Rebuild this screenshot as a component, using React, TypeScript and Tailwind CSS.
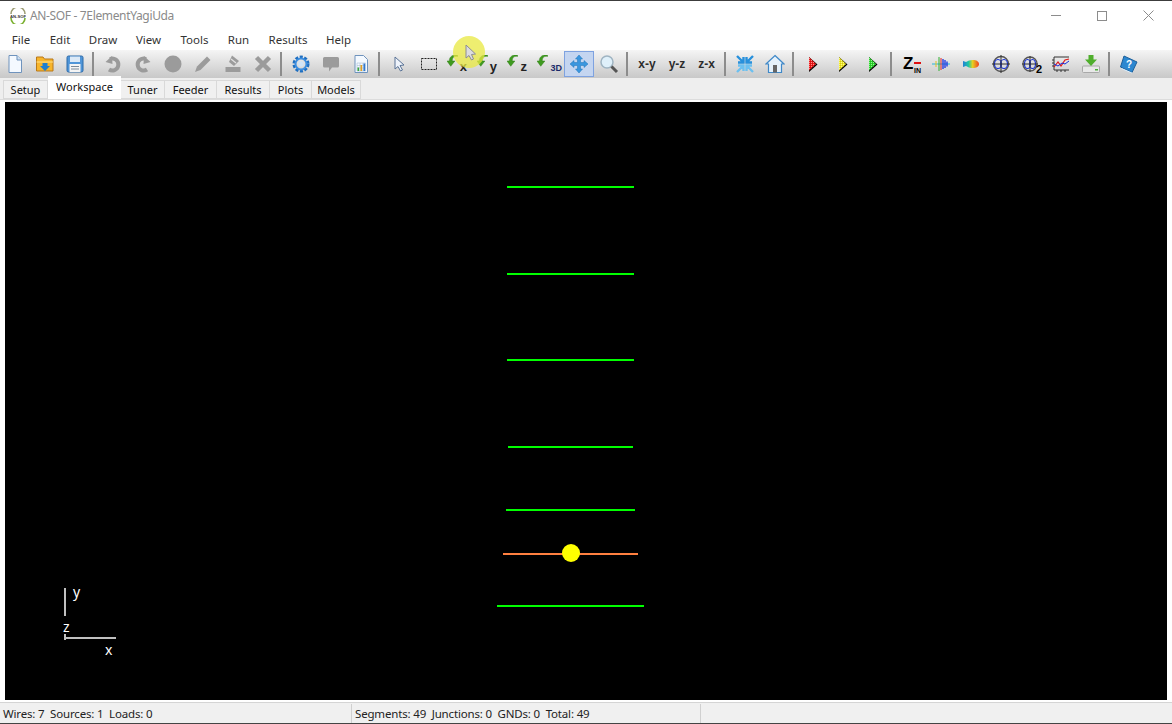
import type { ReactNode } from 'react';

const MENUS = [
  { label: 'File', w: 'w-[38px]' },
  { label: 'Edit', w: 'w-[40px]' },
  { label: 'Draw', w: 'w-[46px]' },
  { label: 'View', w: 'w-[45px]' },
  { label: 'Tools', w: 'w-[47px]' },
  { label: 'Run', w: 'w-[41px]' },
  { label: 'Results', w: 'w-[58px]' },
  { label: 'Help', w: 'w-[43px]' },
];

const TABS = [
  { label: 'Setup', w: 'w-[45px]' },
  { label: 'Workspace', w: 'w-[73px]', active: true },
  { label: 'Tuner', w: 'w-[44px]' },
  { label: 'Feeder', w: 'w-[52px]' },
  { label: 'Results', w: 'w-[53px]' },
  { label: 'Plots', w: 'w-[42px]' },
  { label: 'Models', w: 'w-[49px]' },
];

const WIRES = [
  { y: 187, x1: 507, x2: 634, color: '#00ff00' },
  { y: 274, x1: 507, x2: 634, color: '#00ff00' },
  { y: 360, x1: 507, x2: 634, color: '#00ff00' },
  { y: 447, x1: 508, x2: 633, color: '#00ff00' },
  { y: 510, x1: 506, x2: 635, color: '#00ff00' },
  { y: 554, x1: 503, x2: 638, color: '#ff8040' },
  { y: 606, x1: 497, x2: 644, color: '#00ff00' },
];

function Ico({ children }: { children: ReactNode }) {
  return (
    <svg width="20" height="20" viewBox="0 0 20 20" fill="none">
      {children}
    </svg>
  );
}

function Btn({ children, selected }: { children: ReactNode; selected?: boolean }) {
  return (
    <div
      className={
        selected
          ? 'w-[30px] h-[26px] flex items-center justify-center bg-[#c4d5f0] border border-[#7ea2e0]'
          : 'w-[30px] h-[26px] flex items-center justify-center'
      }
    >
      {children}
    </div>
  );
}

function Sep() {
  return (
    <div className="w-2 h-[24px] pl-[2px]">
      <div className="w-[2px] h-full bg-[#8c8c8c]" />
    </div>
  );
}

function RotateArrow({ label, small }: { label: string; small?: boolean }) {
  return (
    <div className="relative w-[20px] h-[20px]">
      <svg className="absolute left-[-2px] top-[1px]" width="12" height="12" viewBox="0 0 16 16">
        <path d="M14 2 C9 1 7 4 7 8 L10.5 8 L5 15 L0 8 L3 8 C3 2 8 -1 14 0 Z" fill="#3f9a1f" stroke="#2a7a12" strokeWidth="0.6" />
      </svg>
      <span
        className={
          small
            ? "absolute right-[-3px] bottom-[1px] font-['Liberation_Sans',sans-serif] font-bold text-[9px] leading-none text-[#1a2a6a]"
            : "absolute right-[2px] bottom-[1px] font-['Liberation_Sans',sans-serif] font-bold text-[13px] leading-none text-[#222]"
        }
      >
        {label}
      </span>
    </div>
  );
}

function RunArrow({ fill }: { fill: string }) {
  return (
    <svg width="20" height="20" viewBox="0 0 20 20" fill="none">
      <defs>
        <pattern id="dither" width="2" height="2" patternUnits="userSpaceOnUse">
          <rect x="0" y="0" width="1" height="1" fill="#ffffff" opacity="0.5" />
          <rect x="1" y="1" width="1" height="1" fill="#000000" opacity="0.15" />
        </pattern>
      </defs>
      <path d="M6 3 L14.5 10.5 L6 18 Z" fill="#000" />
      <path d="M6 3 L13 10 L6 16.5 Z" fill={fill} />
      <path d="M6 3 L13 10 L6 16.5 Z" fill="url(#dither)" />
    </svg>
  );
}

function PlaneText({ label }: { label: string }) {
  return <span className="font-['Liberation_Sans',sans-serif] font-bold text-[12px] leading-none text-[#2c2c2c]">{label}</span>;
}

function Toolbar() {
  const gray = '#9b9b9b';
  return (
    <div className="h-[28px] flex items-center bg-gradient-to-b from-[#f5f5f5] to-[#c8c8c8]">
      <Btn>
        <Ico>
          <path d="M4 1.5 H12 L16.5 6 V18.5 H4 Z" fill="#f4f9ff" stroke="#6f93bd" />
          <path d="M12 1.5 V6 H16.5" fill="#cfe0f2" stroke="#6f93bd" />
        </Ico>
      </Btn>
      <Btn>
        <Ico>
          <path d="M1.5 5 V3 H8 L9.5 5 H18 V17 H1.5 Z" fill="#f7b52c" stroke="#b9791a" />
          <path d="M1.5 8 H18" stroke="#ffe08a" />
          <path d="M7.5 9 H12.5 V12 H15 L10 17 L5 12 H7.5 Z" fill="#1f7fd0" />
        </Ico>
      </Btn>
      <Btn>
        <Ico>
          <rect x="2" y="2" width="16" height="16" rx="1.5" fill="#4f95d8" stroke="#2c6aa8" />
          <rect x="5" y="2.5" width="10" height="5.5" fill="#dbe9f7" />
          <rect x="4.5" y="10" width="11" height="8" fill="#f4f4f4" />
          <path d="M6 12.5 H14 M6 15 H14" stroke="#7a8a9a" />
        </Ico>
      </Btn>
      <Sep />
      <Btn>
        <Ico>
          <path d="M7 5 A6 6 0 1 1 6 15.5" stroke={gray} strokeWidth="4" />
          <path d="M2.5 8 L9 2 L9.5 10 Z" fill={gray} />
        </Ico>
      </Btn>
      <Btn>
        <Ico>
          <path d="M13 5 A6 6 0 1 0 14 15.5" stroke={gray} strokeWidth="4" />
          <path d="M17.5 8 L11 2 L10.5 10 Z" fill={gray} />
        </Ico>
      </Btn>
      <Btn>
        <Ico>
          <circle cx="10" cy="10" r="8.5" fill={gray} />
        </Ico>
      </Btn>
      <Btn>
        <Ico>
          <path d="M2 18 L4 12.5 L14 2.5 L17.5 6 L7.5 16 Z" fill={gray} />
        </Ico>
      </Btn>
      <Btn>
        <Ico>
          <path d="M9 1.5 L16 7 L11 12 L6 8 Z" fill={gray} />
          <rect x="2.5" y="13" width="15" height="5" fill={gray} />
          <path d="M8 5 L13 9" stroke="#e2e2e2" strokeWidth="1.2" />
        </Ico>
      </Btn>
      <Btn>
        <Ico>
          <path d="M3.5 3.5 L16.5 16.5 M16.5 3.5 L3.5 16.5" stroke={gray} strokeWidth="4.5" />
        </Ico>
      </Btn>
      <Sep />
      <Btn>
        <Ico>
          <circle cx="10" cy="10" r="7" stroke="#1f6fc0" strokeWidth="3" strokeDasharray="3 1.5" />
          <circle cx="10" cy="10" r="5.5" stroke="#3c8ee0" strokeWidth="2" />
          <circle cx="10" cy="10" r="2.8" fill="#cfe4f8" />
        </Ico>
      </Btn>
      <Btn>
        <Ico>
          <path d="M3.5 3 H16.5 A1.5 1.5 0 0 1 18 4.5 V12 A1.5 1.5 0 0 1 16.5 13.5 H11 L8 17.5 V13.5 H3.5 A1.5 1.5 0 0 1 2 12 V4.5 A1.5 1.5 0 0 1 3.5 3 Z" fill={gray} />
        </Ico>
      </Btn>
      <Btn>
        <Ico>
          <path d="M4 1.5 H12.5 L16.5 5.5 V18.5 H4 Z" fill="#f4f9ff" stroke="#6f93bd" />
          <path d="M6 9 H14.5 V17 H6 Z M6 11.5 H14.5 M6 14 H14.5 M9 9 V17 M12 9 V17" stroke="#a8bdd4" strokeWidth="0.6" />
          <rect x="6.5" y="13.5" width="1.6" height="3.5" fill="#3aa63a" />
          <rect x="9.5" y="11" width="1.6" height="6" fill="#e0a020" />
          <rect x="12.5" y="9.5" width="1.6" height="7.5" fill="#2f78d0" />
        </Ico>
      </Btn>
      <Sep />
      <Btn>
        <Ico>
          <path d="M6 3 L6 15 L9 12.5 L11.5 17 L13.5 16 L11 11.5 L15 11 Z" fill="#eef3fb" stroke="#5a7396" />
        </Ico>
      </Btn>
      <Btn>
        <Ico>
          <rect x="2.5" y="4.5" width="15" height="11" stroke="#222" strokeDasharray="2 1" />
        </Ico>
      </Btn>
      <Btn>
        <RotateArrow label="x" />
      </Btn>
      <Btn>
        <RotateArrow label="y" />
      </Btn>
      <Btn>
        <RotateArrow label="z" />
      </Btn>
      <Btn>
        <RotateArrow label="3D" small />
      </Btn>
      <Btn selected>
        <Ico>
          <path d="M10 1 L13.5 5 H11.5 V8.5 H15 V6.5 L19 10 L15 13.5 V11.5 H11.5 V15 H13.5 L10 19 L6.5 15 H8.5 V11.5 H5 V13.5 L1 10 L5 6.5 V8.5 H8.5 V5 H6.5 Z" fill="#3a96de" stroke="#1f74b8" strokeWidth="0.5" />
        </Ico>
      </Btn>
      <Btn>
        <Ico>
          <circle cx="8" cy="8" r="6" fill="#dff0fa" stroke="#9fb4c2" strokeWidth="1.5" />
          <path d="M12.5 12.5 L18 18" stroke="#555" strokeWidth="3" />
        </Ico>
      </Btn>
      <Sep />
      <Btn>
        <PlaneText label="x-y" />
      </Btn>
      <Btn>
        <PlaneText label="y-z" />
      </Btn>
      <div className="w-[29px] h-[26px] flex items-center justify-center">
        <PlaneText label="z-x" />
      </div>
      <div className="w-[1px]" />
      <Sep />
      <Btn>
        <Ico>
          <path d="M2 2 L8.5 8.5 M8.5 3 V8.5 H3 M18 2 L11.5 8.5 M11.5 3 V8.5 H17" stroke="#2790dc" strokeWidth="2.4" />
          <path d="M2 18 L8.5 11.5 M8.5 17 V11.5 H3 M18 18 L11.5 11.5 M11.5 17 V11.5 H17" stroke="#6cc0f0" strokeWidth="2.4" />
        </Ico>
      </Btn>
      <Btn>
        <Ico>
          <path d="M10 1.5 L19 10 H16.5 V18.5 H3.5 V10 H1 Z" fill="#e6f2fb" stroke="#3f88c8" strokeWidth="1.2" />
          <rect x="8" y="11" width="4" height="7.5" fill="#666" />
        </Ico>
      </Btn>
      <Sep />
      <Btn>
        <RunArrow fill="#f01818" />
      </Btn>
      <Btn>
        <RunArrow fill="#f2ea22" />
      </Btn>
      <Btn>
        <RunArrow fill="#2bd82b" />
      </Btn>
      <Sep />
      <Btn>
        <div className="relative w-[20px] h-[20px] font-['Liberation_Sans',sans-serif] font-bold text-black">
          <span className="absolute left-[2px] top-[1px] text-[17px] leading-[17px]">Z</span>
          <span className="absolute right-0 bottom-[-1px] text-[7px] leading-[8px]">IN</span>
          <div className="absolute right-0 top-[8px] w-[7px] h-[2px] bg-[#e01010]" />
        </div>
      </Btn>
      <Btn>
        <Ico>
          <path d="M1 10 H19" stroke="#25b8d8" />
          <path d="M5 7 V13" stroke="#e8c020" />
          <path d="M8 3 V17" stroke="#30b030" />
          <path d="M10 4 V16" stroke="#e02020" />
          <path d="M12 5 V15 M14 6 V14 M16 7.5 V12.5" stroke="#1830e0" strokeWidth="1.3" />
        </Ico>
      </Btn>
      <Btn>
        <svg width="20" height="20" viewBox="0 0 20 20">
          <defs>
            <linearGradient id="lobe" x1="0" x2="1">
              <stop offset="0" stopColor="#2080d8" />
              <stop offset="0.35" stopColor="#20c8a0" />
              <stop offset="0.6" stopColor="#e8d020" />
              <stop offset="1" stopColor="#f04020" />
            </linearGradient>
          </defs>
          <path d="M2 7 L5 8 L8 6.5 C13 5 18 6.5 18 10 C18 13.5 13 15 8 13.5 L5 12 L2 13 Z" fill="url(#lobe)" />
        </svg>
      </Btn>
      <Btn>
        <Ico>
          <circle cx="10" cy="10" r="7.5" stroke="#555" strokeWidth="1.4" />
          <ellipse cx="7" cy="10" rx="3.5" ry="4.5" stroke="#1430d8" strokeWidth="1.2" />
          <ellipse cx="13" cy="10" rx="3.5" ry="4.5" stroke="#1430d8" strokeWidth="1.2" />
          <path d="M1 10 H19 M10 1 V19" stroke="#333" />
        </Ico>
      </Btn>
      <Btn>
        <div className="relative w-[20px] h-[20px]">
          <Ico>
            <circle cx="9" cy="10" r="7" stroke="#555" strokeWidth="1.4" />
            <ellipse cx="6.5" cy="10" rx="3" ry="4.5" stroke="#1430d8" strokeWidth="1.2" />
            <ellipse cx="11.5" cy="10" rx="3" ry="4.5" stroke="#1430d8" strokeWidth="1.2" />
            <path d="M1 10 H17 M9 2 V18" stroke="#333" />
          </Ico>
          <span className="absolute right-[-1px] bottom-[-1px] font-['Liberation_Sans',sans-serif] font-bold text-[11px] leading-none text-black">2</span>
        </div>
      </Btn>
      <Btn>
        <Ico>
          <path d="M3 3 V16 H18 M3 3 H18 M1 6 H3 M1 9 H3 M1 12 H3 M6 16 V18 M10 16 V18 M14 16 V18" stroke="#333" />
          <path d="M3 13 L7 8 L10 12 L14 6 L18 5" stroke="#e01818" strokeWidth="1.2" />
          <path d="M3 10 L7 12 L11 9 L14 10 L18 7" stroke="#1830e0" />
        </Ico>
      </Btn>
      <Btn>
        <Ico>
          <rect x="1.5" y="12" width="17" height="6.5" rx="1" fill="#e8e8e8" stroke="#a8a8a8" />
          <rect x="14" y="15" width="3" height="1.5" fill="#4caf3a" />
          <path d="M7.5 1 H12.5 V5.5 H16 L10 12 L4 5.5 H7.5 Z" fill="#4fae2c" />
        </Ico>
      </Btn>
      <Sep />
      <Btn>
        <Ico>
          <path d="M5 2 L18 8 L13 18.5 L1.5 13 Z" fill="#2c87d0" stroke="#1c5f9a" />
          <path d="M2.5 14.5 L13 19" stroke="#dbeefc" strokeWidth="1" />
          <text x="7" y="13.5" fontSize="10" fontWeight="700" fill="#fff" fontFamily="Liberation Sans, sans-serif">?</text>
        </Ico>
      </Btn>
    </div>
  );
}

export default function App() {
  return (
    <div className="relative w-[1172px] h-[724px] overflow-hidden bg-[#eeeeee] border-t border-[#3c3c3c] font-['Noto_Sans','Open_Sans',sans-serif] text-[11.5px] text-[#222]">
      {/* Title bar */}
      <div className="h-[29px] bg-white flex items-center pl-[10px]">
        <svg width="16" height="16" viewBox="0 0 16 16">
          <path d="M1 6 A7 7 0 0 1 15 6" stroke="#9a9a70" strokeWidth="1.6" fill="none" />
          <path d="M1 10 A7 7 0 0 0 15 10" stroke="#7ab030" strokeWidth="1.6" fill="none" />
          <text x="8" y="9.6" textAnchor="middle" fontSize="4.2" fontWeight="700" fill="#333" fontFamily="Liberation Sans, sans-serif">AN-SOF</text>
        </svg>
        <span className="ml-[4px] text-[12px] text-[#8a8a8a] tracking-[-0.35px]">AN-SOF - 7ElementYagiUda</span>
        <div className="ml-auto flex items-center pr-[1px]">
          <div className="w-[46px] flex justify-center">
            <div className="w-[10px] h-[1px] bg-[#8c8c8c]" />
          </div>
          <div className="w-[46px] flex justify-center">
            <div className="w-[10px] h-[10px] border border-[#8c8c8c]" />
          </div>
          <div className="w-[46px] flex justify-center">
            <svg width="11" height="11" viewBox="0 0 11 11">
              <path d="M0.5 0.5 L10.5 10.5 M10.5 0.5 L0.5 10.5" stroke="#8c8c8c" />
            </svg>
          </div>
        </div>
      </div>

      {/* Menu bar */}
      <div className="h-[20px] bg-white flex items-center pl-[2px]">
        {MENUS.map((m) => (
          <div key={m.label} className={`${m.w} text-center text-[#333]`}>
            {m.label}
          </div>
        ))}
      </div>

      <Toolbar />

      {/* Tab strip */}
      <div className="h-[22px] flex items-end pl-[3px] border-b border-[#dcdcdc]">
        {TABS.map((t) =>
          t.active ? (
            <div key={t.label} className={`${t.w} h-[23px] bg-white flex items-center justify-center pb-[1px] text-[11px] text-[#111]`}>
              {t.label}
            </div>
          ) : (
            <div key={t.label} className={`${t.w} h-[19px] pt-[2px] bg-[#f0f0f0] border border-l-0 border-[#d9d9d9] first:border-l flex items-center justify-center text-[11px] text-[#111]`}>
              {t.label}
            </div>
          ),
        )}
      </div>

      {/* Workspace canvas */}
      <div className="h-[602px] bg-white px-[5px] pt-[2px] pb-[2px]">
        <div className="relative w-full h-full bg-black">
          <svg className="w-full h-full" viewBox="5 102 1162 598">
            {WIRES.map((w) => (
              <line key={w.y} x1={w.x1} x2={w.x2} y1={w.y} y2={w.y} stroke={w.color} strokeWidth="2" />
            ))}
            <circle cx="571" cy="553" r="9" fill="#ffff00" />
            <path d="M65 588 V616" stroke="#c0c0c0" strokeWidth="2" />
            <path d="M65 638 H116" stroke="#c0c0c0" strokeWidth="2" />
            <path d="M65 634 V640" stroke="#c0c0c0" strokeWidth="2" />
          </svg>
          <span className="absolute left-[68px] top-[481px] text-[14px] leading-[18px] text-white">y</span>
          <span className="absolute left-[58px] top-[516px] text-[14px] leading-[18px] text-white">z</span>
          <span className="absolute left-[100px] top-[539px] text-[14px] leading-[18px] text-white">x</span>
        </div>
      </div>

      {/* Status bar */}
      <div className="h-[22px] pt-[1px] flex items-center bg-[#f0f0f0] border-t border-[#d4d4d4] border-b border-b-[#444] text-[#222] tracking-[-0.17px]">
        <div className="w-[351px] pl-[3px] whitespace-pre">Wires: 7  Sources: 1  Loads: 0</div>
        <div className="w-[349px] h-full flex items-center pl-[3px] border-l border-[#d0d0d0] whitespace-pre">Segments: 49  Junctions: 0  GNDs: 0  Total: 49</div>
        <div className="flex-1 h-full border-l border-[#d0d0d0]" />
      </div>

      {/* Cursor highlight from the screen capture */}
      <div className="absolute left-[453px] top-[35px] w-[32px] h-[32px] rounded-full bg-[#e8e840]/75 pointer-events-none" />
      <svg className="absolute left-[464px] top-[43px] pointer-events-none" width="14" height="18" viewBox="0 0 14 18">
        <path d="M2 1 L2 14 L5 11.5 L7.5 16 L9.5 15 L7.5 10.5 L11.5 10 Z" fill="#dcdce0" stroke="#8c8c94" />
      </svg>
    </div>
  );
}
